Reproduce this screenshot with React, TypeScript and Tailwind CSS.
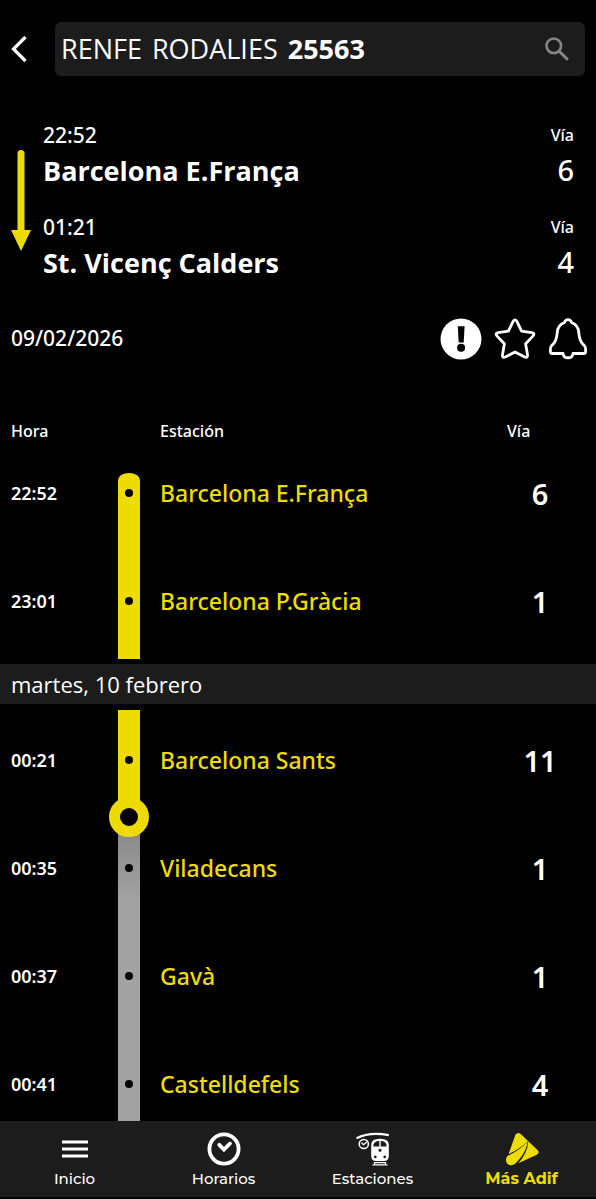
import type { ReactNode } from "react";

type Rail = "start" | "done" | "pending-first" | "pending";
type Stop = { time: string; station: string; track: string; rail: Rail };

const firstDay: Stop[] = [
  { time: "22:52", station: "Barcelona E.França", track: "6", rail: "start" },
  { time: "23:01", station: "Barcelona P.Gràcia", track: "1", rail: "done" },
];

const secondDay: Stop[] = [
  { time: "00:21", station: "Barcelona Sants", track: "11", rail: "done" },
  { time: "00:35", station: "Viladecans", track: "1", rail: "pending-first" },
  { time: "00:37", station: "Gavà", track: "1", rail: "pending" },
  { time: "00:41", station: "Castelldefels", track: "4", rail: "pending" },
];

const railStyles: Record<Rail, string> = {
  start: "mt-[30px] h-[78px] rounded-t-[50%_7px] bg-[#eedc00] pt-[16px]",
  done: "h-[108px] bg-[#eedc00] pt-[46px]",
  "pending-first": "h-[108px] bg-linear-to-b from-[#858585] to-[#a2a2a2] to-75% pt-[46px]",
  pending: "h-[108px] bg-[#a2a2a2] pt-[46px]",
};

function StopRow({ stop }: { stop: Stop }) {
  return (
    <tr className="align-top">
      <td className="pl-[11px] text-lg leading-[100px] font-semibold">{stop.time}</td>
      <td className="relative">
        <div className={`w-[22px] ${railStyles[stop.rail]}`}>
          <div className="mx-auto size-2 rounded-full bg-black" />
        </div>
        {stop.rail === "pending-first" && (
          <div className="absolute -top-[21px] -left-[9px] size-10 rounded-full border-[11px] border-[#eedc00] bg-black" />
        )}
      </td>
      <td className="text-[23px] leading-[100px] font-medium text-[#eedc00]">{stop.station}</td>
      <td className="text-center text-[29px] leading-[102px] font-semibold">{stop.track}</td>
    </tr>
  );
}

function Endpoint({ time, name, track }: { time: string; name: string; track: string }) {
  return (
    <div className="flex justify-between">
      <div>
        <div className="text-[21px] leading-8 font-medium">{time}</div>
        <div className="font-['Open_Sans','Noto_Sans',sans-serif] text-[27px] leading-10 font-bold">{name}</div>
      </div>
      <div className="text-right font-medium">
        <div className="text-base leading-8">Vía</div>
        <div className="text-[29px] leading-[38px]">{track}</div>
      </div>
    </div>
  );
}

function NavItem({ label, active, children }: { label: string; active?: boolean; children: ReactNode }) {
  return (
    <a
      href="#"
      className={`flex flex-1 flex-col items-center pt-2 leading-5 ${
        active ? "text-[16px] font-bold text-[#eedc00]" : "text-[15px] font-medium text-white"
      }`}
    >
      <span className="flex h-10 items-center">{children}</span>
      {label}
    </a>
  );
}

export default function App() {
  return (
    <div className="flex h-screen flex-col bg-black font-['Noto_Sans',sans-serif] text-white">
      <header className="flex items-center pt-[22px] pr-[11px] pl-[10px]">
        <button type="button" aria-label="Volver" className="w-[45px]">
          <svg width="18" height="28" viewBox="0 0 18 28" fill="none" stroke="currentColor" strokeWidth="3.2">
            <path d="M15.5 2 3.5 14l12 12" />
          </svg>
        </button>
        <button
          type="button"
          className="flex h-[54px] flex-1 items-center justify-between rounded-md bg-[#1c1c1c] pr-4 pl-[6px] font-['Open_Sans','Noto_Sans',sans-serif] text-[27px]"
        >
          <span className="flex gap-[10px]">
            <span>RENFE</span>
            <span>RODALIES</span>
            <b>25563</b>
          </span>
          <svg width="24" height="24" viewBox="0 0 24 24" fill="none" stroke="#868686" strokeWidth="2.6">
            <circle cx="8.8" cy="8.8" r="7.3" />
            <path d="m14 14 8.8 8.8" strokeWidth="3" />
          </svg>
        </button>
      </header>

      <main className="flex-1 overflow-y-auto pt-[43px] [scrollbar-width:none]">
        <section className="flex pr-[22px] pl-[11px]">
          <svg className="mt-[31px] mr-3 shrink-0" width="20" height="101" viewBox="0 0 20 101" fill="#eedc00">
            <rect x="6.5" y="0" width="7" height="84" rx="3.5" />
            <path d="M0 80h20L10 101z" />
          </svg>
          <div className="flex flex-1 flex-col gap-5">
            <Endpoint time="22:52" name="Barcelona E.França" track="6" />
            <Endpoint time="01:21" name="St. Vicenç Calders" track="4" />
          </div>
        </section>

        <section className="mt-[34px] flex h-11 items-center justify-between pr-2 pl-[11px]">
          <time className="text-[21px] font-medium">09/02/2026</time>
          <div className="flex items-center gap-3">
            <button type="button" aria-label="Avisos">
              <svg width="42" height="42" viewBox="0 0 42 42">
                <circle cx="21" cy="21" r="20.5" fill="#fff" />
                <path d="M17.8 8.200h6.800l-.9 16.300h-5z" />
                <circle cx="21.1" cy="29.8" r="4" />
              </svg>
            </button>
            <button type="button" aria-label="Favorito">
              <svg width="42" height="42" viewBox="0 0 42 42" fill="none" stroke="#fff" strokeWidth="2.8" strokeLinejoin="round">
                <path d="M19.1 3.4q1.9-3.2 3.8 0l4.700 9.700 10.300 1.600q3.400.8 1 3.400l-7.300 7.700 1.900 11q.4 3.500-2.800 2.200L21 33.900 11.300 39q-3.200 1.300-2.800-2.200l1.900-11-7.300-7.700q-2.400-2.600 1-3.400l10.300-1.600z" />
              </svg>
            </button>
            <button type="button" aria-label="Notificaciones">
              <svg width="40" height="42" viewBox="0 0 40 42" fill="none" stroke="#fff" strokeWidth="2.8" strokeLinejoin="round">
                <path d="M16.400 4.600C17.200 2.200 18.400 1.600 20 1.600s2.800.6 3.600 3c4.700 1.600 6.900 5.200 7.200 10.200.4 5.800 1.200 9 5 12.200 1.200 1.100 1.800 2.200 1.800 3.800v3q0 1.700-1.700 1.700H25c-.4 2.900-2.100 4.400-5 4.400s-4.600-1.500-5-4.400H4.100q-1.700 0-1.700-1.700v-3c0-1.600.6-2.700 1.800-3.800 3.800-3.200 4.600-6.400 5-12.200.3-5 2.500-8.600 7.200-10.200z" />
              </svg>
            </button>
          </div>
        </section>

        <table className="mt-[58px] w-full table-fixed border-collapse text-left">
          <colgroup>
            <col className="w-[118px]" />
            <col className="w-[42px]" />
            <col />
            <col className="w-[112px]" />
          </colgroup>
          <thead>
            <tr className="h-6 text-base leading-6">
              <th className="pl-[11px] font-medium">Hora</th>
              <th aria-label="Trayecto" />
              <th className="font-medium">Estación</th>
              <th className="pl-[23px] font-medium">Vía</th>
            </tr>
          </thead>
          <tbody>
            {firstDay.map((stop) => (
              <StopRow key={stop.time} stop={stop} />
            ))}
          </tbody>
          <tbody>
            <tr>
              <th
                colSpan={4}
                className="pt-[5px] pb-[6px] font-['Open_Sans','Noto_Sans',sans-serif] text-[22px] leading-10 font-normal"
              >
                <div className="bg-[#1c1c1c] pl-[11px]">martes, 10 febrero</div>
              </th>
            </tr>
            {secondDay.map((stop) => (
              <StopRow key={stop.time} stop={stop} />
            ))}
          </tbody>
        </table>
      </main>

      <nav className="mb-0.5 flex h-[76px] shrink-0 bg-[#1c1c1c] font-['Montserrat',Inter,sans-serif]">
        <NavItem label="Inicio">
          <svg width="26" height="20" viewBox="0 0 26 20" fill="currentColor">
            <path d="M0 1.500h26v3H0zM0 8.500h26v3H0zM0 15.500h26v3H0z" />
          </svg>
        </NavItem>
        <NavItem label="Horarios">
          <svg width="34" height="34" viewBox="0 0 34 34" fill="none" stroke="currentColor" strokeWidth="3.800">
            <circle cx="17" cy="17" r="14.600" />
            <path d="m12.300 12.800 4.700 4.700 6-6" strokeLinecap="round" />
          </svg>
        </NavItem>
        <NavItem label="Estaciones">
          <svg width="34" height="34" viewBox="0 0 34 34" fill="none" stroke="currentColor">
            <path d="M.5 6.200C9 1.800 21 .8 32.800 3.200" strokeWidth="2.200" />
            <circle cx="7.800" cy="12" r="4.600" strokeWidth="1.500" />
            <path d="m5.500 10.700 2 2 3.300-2.800" strokeWidth="1.300" />
            <path
              fill="currentColor"
              stroke="none"
              fillRule="evenodd"
              d="M20 7.300q4-1 8 0 4.800 1.200 4.800 5.700v11q0 5-4.800 5h-8q-4.800 0-4.800-5V13q0-4.500 4.800-5.700zM17.300 14.500h6V9q-6 0-6 5.500zm7.400 0h6q0-5.500-6-5.500zM24 16.700a1.600 1.600 0 1 0 .01 0zM19.300 23.500a1.400 1.400 0 1 0 .01 0zm9.400 0a1.400 1.400 0 1 0 .01 0z"
            />
            <path d="M16.500 32.800h15M18.500 30.700h11M18.500 30v3M29.500 30v3" strokeWidth="1.300" />
          </svg>
        </NavItem>
        <NavItem label="Más Adif" active>
          <svg width="34" height="34" viewBox="0 0 34 34" fill="currentColor">
            <path d="M10.500 2.500q2.500-3 5.200-.4L33 18.500q1.700 2.700-1.200 4.300L13.300 31.300C18.500 25.500 22.800 18 23.300 9 17.500 14.800 10.500 18.500 3.500 22.200z" />
            <path d="M3 23.700C10 20.200 17 16 22.600 9.800 21.500 17.500 17.200 25 10.700 31.300 6.500 35 1 32.700 1 28.300 1 26.300 1.500 24.700 3 23.700z" />
          </svg>
        </NavItem>
      </nav>
    </div>
  );
}
